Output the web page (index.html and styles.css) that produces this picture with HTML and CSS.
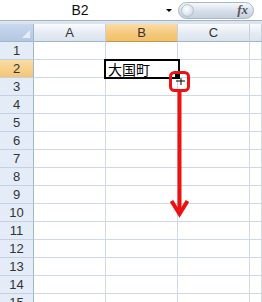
FILE: index.html
```html
<!DOCTYPE html>
<html lang="ja">
<head>
    <meta charset="UTF-8">
    <title>オートフィル</title>
    <link rel="stylesheet" href="styles.css">
</head>
<body>
    <div class="toolbar">
        <div class="namebox">
            <span class="cellref">B2</span>
            <span class="dropdown"></span>
        </div>
        <div class="fxpill">
            <span class="knob"></span>
            <span class="fx">fx</span>
        </div>
    </div>
    <div class="band"></div>

    <div class="sheet">
        <div class="grid" id="grid">
            <div class="corner"><span class="tri"></span></div>
            <div class="colhead">A</div>
            <div class="colhead active">B</div>
            <div class="colhead">C</div>
            <div class="colhead"></div>
        </div>

        <div class="selection">大国町</div>

        <svg class="marker" width="40" height="152" viewBox="0 0 40 152">
            <rect x="2.5" y="2.5" width="18" height="18" rx="4" fill="none" stroke="#ee1111" stroke-width="3"/>
            <rect x="7" y="4" width="5" height="5" fill="#000"/>
            <path d="M8 11 H17 M13 8 V15" stroke="#000" stroke-width="1" fill="none"/>
            <line x1="11.5" y1="20" x2="11.5" y2="142" stroke="#ee1111" stroke-width="4"/>
            <polyline points="3.5,131 11.5,144 19.5,131" fill="none" stroke="#ee1111" stroke-width="4"/>
        </svg>
    </div>

    <script>
        // rows 1..15, empty cells except the selection overlay
        const grid = document.getElementById("grid");
        for (let r = 1; r <= 15; r++) {
            let html = `<div class="rowhead${r === 2 ? ' active' : ''}">${r}</div>`;
            for (let c = 0; c < 4; c++) {
                html += `<div class="cell"></div>`;
            }
            grid.insertAdjacentHTML("beforeend", html);
        }
    </script>
</body>
</html>
```

FILE: styles.css
```css
body {
    margin: 0;
    width: 262px;
    height: 302px;
    overflow: hidden;
    background: #ffffff;
    font-family: "Liberation Sans", Arial, sans-serif;
}

.toolbar {
    display: flex;
    align-items: center;
    height: 20px;
    border-bottom: 1px solid #a3b2c6;
    background: #ffffff;
}

.namebox {
    position: relative;
    width: 176px;
    height: 20px;
    display: flex;
    align-items: center;
}

.cellref {
    width: 160px;
    text-align: center;
    font-size: 14px;
    color: #111;
}

.dropdown {
    width: 0;
    height: 0;
    margin-left: 6px;
    border-left: 3px solid transparent;
    border-right: 3px solid transparent;
    border-top: 3px solid #000;
}

.fxpill {
    width: 76px;
    height: 17px;
    margin-left: 2px;
    border: 1px solid #a9b6c8;
    border-radius: 9px;
    background: linear-gradient(#f6f8fb, #d4dce8 60%, #c6d0de);
    display: flex;
    align-items: center;
    justify-content: space-between;
    box-sizing: border-box;
}

.knob {
    width: 13px;
    height: 13px;
    margin-left: 2px;
    border-radius: 50%;
    background: radial-gradient(circle at 40% 35%, #ffffff, #dde4ee 60%, #b9c5d6);
    border: 1px solid #b3bfcf;
    box-sizing: border-box;
}

.fx {
    font-family: "Liberation Serif", serif;
    font-style: italic;
    font-weight: bold;
    font-size: 13px;
    color: #555;
    margin-right: 5px;
}

.band {
    height: 3px;
    background: #dce4ee;
}

.sheet {
    position: relative;
}

.grid {
    display: grid;
    grid-template-columns: 34px 72px 72px 72px 12px;
    grid-auto-rows: 18px;
}

.corner {
    position: relative;
    background: linear-gradient(#c9d8ec, #b3c8e3);
    border-right: 1px solid #9eb6ce;
    border-bottom: 1px solid #9eb6ce;
}

.corner .tri {
    position: absolute;
    right: 3px;
    bottom: 3px;
    width: 0;
    height: 0;
    border-left: 8px solid transparent;
    border-bottom: 8px solid #e8eef7;
}

.colhead {
    display: flex;
    align-items: center;
    justify-content: center;
    font-size: 13px;
    color: #333;
    background: linear-gradient(#f9fbfd, #e4eaf2 60%, #dbe3ed);
    border-right: 1px solid #c5d1e0;
    border-bottom: 1px solid #9eb6ce;
}

.colhead.active {
    background: linear-gradient(#fbdca6, #f4c77a 60%, #f1c06a);
    border-bottom: 1px solid #c29b4a;
}

.rowhead {
    display: flex;
    align-items: center;
    justify-content: center;
    font-size: 13px;
    color: #333;
    background: #e4ecf7;
    border-right: 1px solid #9eb6ce;
    border-bottom: 1px solid #c5d1e0;
}

.rowhead.active {
    background: linear-gradient(#fbdca6, #f3c676);
}

.cell {
    border-right: 1px solid #d0d7e5;
    border-bottom: 1px solid #d0d7e5;
}

.selection {
    position: absolute;
    left: 104px;
    top: 35px;
    width: 70px;
    height: 16px;
    border: 2px solid #000;
    background: #fff;
    font-family: "Noto Sans CJK JP", sans-serif;
    font-size: 14px;
    line-height: 16px;
    padding-left: 2px;
    box-sizing: content-box;
}

.marker {
    position: absolute;
    left: 168px;
    top: 46px;
}
```
